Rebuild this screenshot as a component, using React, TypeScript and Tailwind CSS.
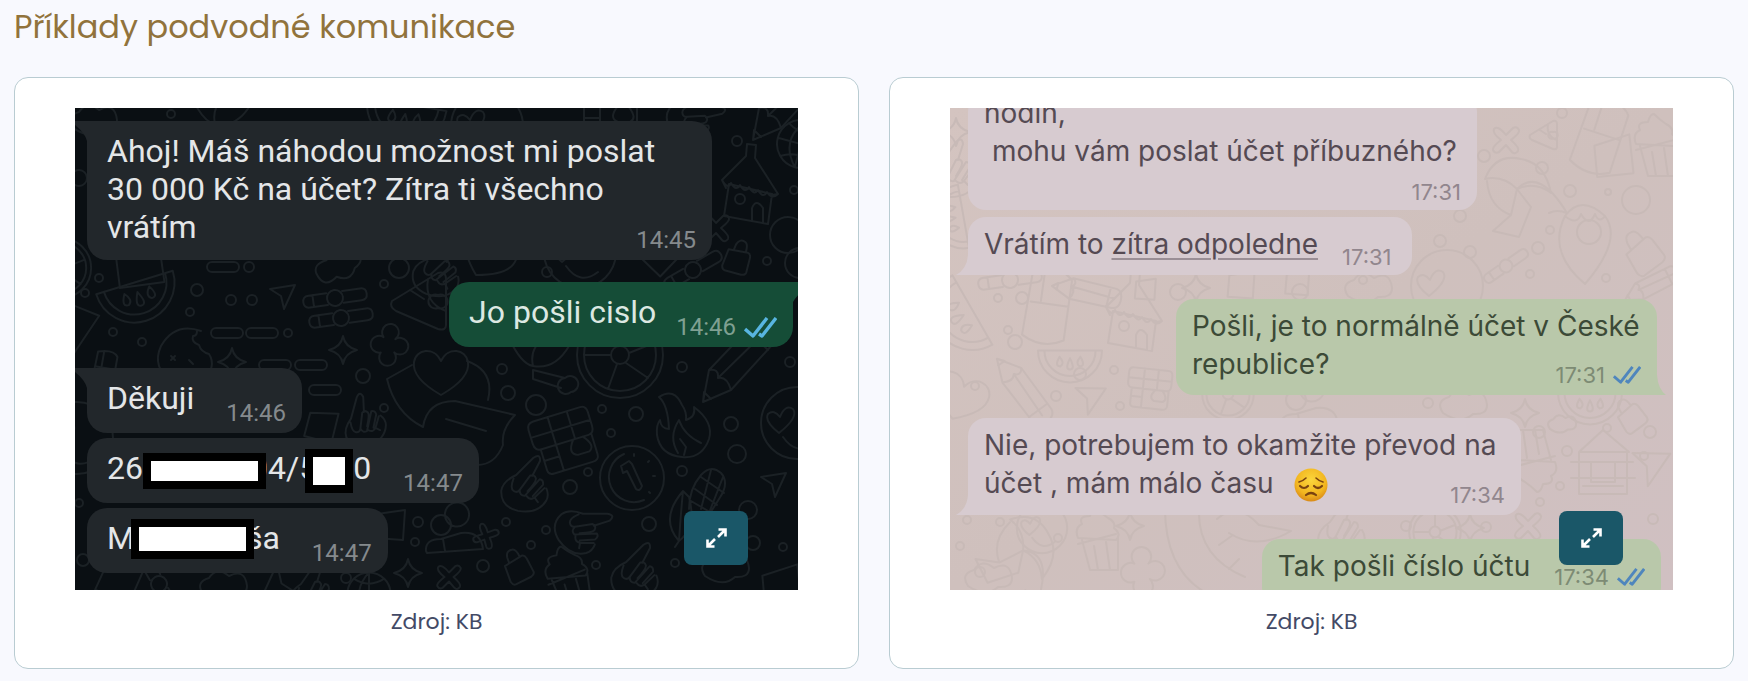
import type { ReactNode } from "react";

type At = { x: number; y: number; r?: number; s?: number };

const place = ({ x, y, r = 0, s = 1 }: At) => `translate(${x} ${y}) rotate(${r}) scale(${s})`;

const shapes: Record<string, string> = {
  plane: "M-12 -8L13 -12L2 12L-1 -1Z",
  star: "M0 -14Q2 -3 14 0Q2 3 0 14Q-2 3 -14 0Q-2 -3 0 -14Z",
  pill: "M-11 -5H11A5 5 0 0 1 11 5H-11A5 5 0 0 1 -11 -5Z",
  heart: "M0 22C-14 14 -29 2 -27 -11C-25 -24 -7 -27 0 -12C7 -27 25 -24 27 -11C29 2 14 14 0 22Z",
  melon: "M-40 -12H40A40 40 0 0 1 -40 -12ZM-32 -12A32 32 0 0 0 32 -12M-13 -4Q-20 8 -12 8Q-6 4 -13 -4M0 -2Q-7 12 0 12Q7 12 0 -2M13 -4Q6 4 12 8Q20 8 13 -4",
  slider: "M-8 -6H-26Q-32 -6 -32 0Q-32 6 -26 6H-8M8 -6H26Q32 -6 32 0Q32 6 26 6H8M-8 0A8 8 0 1 0 8 0A8 8 0 1 0 -8 0M-22 -6V6",
  pizza: "M-28 -2L18 -30Q26 -32 26 -24V22Q26 28 18 26L-24 8Q-31 4 -28 -2ZM8 -24Q4 0 26 8M18 -8A7 7 0 1 0 18 5A7 7 0 1 0 18 -8M-10 -13L4 -4",
  house: "M-24 30L-19 -2L24 8L20 38ZM-22 2L-26 -6L-2 -30L-1 -42L8 -41L7 -28L30 8L24 9M-26 -6Q-20 4 -17 -3Q-12 6 -8 -1Q-3 8 1 1Q6 10 10 4Q15 13 19 6Q24 14 30 8M4 34V22Q8 12 15 22V37M-13 13A5 5 0 1 0 -3 13A5 5 0 1 0 -13 13",
  globe: "M-24 0A24 24 0 1 0 24 0A24 24 0 1 0 -24 0M-24 0H24M0 -24V24M-17 -17Q0 -6 17 -17M-17 17Q0 6 17 17M0 -24Q-22 0 0 24",
  lock: "M-11 -5L8 -9Q11 -9 12 -5L14 10Q14 13 10 14L-7 16Q-10 16 -11 12ZM-6 -6V-12Q-5 -19 1 -18Q5 -18 6 -9",
  cross: "M0 -5L7 -12Q11 -14 13 -10Q14 -7 5 0Q14 8 12 11Q9 15 6 12L0 5L-7 12Q-11 14 -13 10Q-14 7 -5 0Q-14 -7 -12 -11Q-8 -15 0 -5Z",
  wheel: "M-43 0A43 43 0 1 0 43 0A43 43 0 1 0 -43 0M-36 0A36 36 0 1 0 36 0A36 36 0 1 0 -36 0M-9 0A9 9 0 1 0 9 0A9 9 0 1 0 -9 0M-9 0H-36M9 -2L34 -12M-3 9L-12 34M6 8L28 23M0 -9V-36",
  pencil: "M-36 42L-30 10L14 -36Q22 -42 32 -32Q40 -24 34 -16L-8 30ZM-30 10Q-20 8 -21 18Q-12 16 -8 30M-21 18L24 -26M8 -30L29 -10M-36 42L-35 32L-28 39",
  fire: "M-25 -30Q-10 -40 -2 -22Q3 -15 2 -7Q12 -10 10 -20Q30 -5 25 12Q18 32 -2 30Q-24 28 -27 8Q-28 -2 -24 -7Q-23 2 -15 2Q-16 -22 -25 -30ZM-6 26Q-16 10 -5 -7Q0 8 17 16M-4 12L2 20L0 28",
  gift: "M-32 -20Q-32 -27 -25 -27H24Q30 -27 30 -20V-6Q30 2 24 2H-25Q-32 2 -32 -6ZM-32 -12H30M-10 -27V2M10 -27V2M-26 2V24Q-26 29 -20 29H20Q27 29 27 23V2M-10 2V29M8 2Q-2 14 8 18H20Q28 14 18 2M-26 14H-10",
  smile: "M-36 0A36 36 0 1 0 36 0A36 36 0 1 0 -36 0M-18 10Q-33 -2 -29 -9Q-23 -14 -17 -6Q-12 -19 -4 -14Q2 -6 -18 10M-14 14Q0 34 18 20",
  coin: "M-32 0A32 32 0 1 0 32 0A32 32 0 1 0 -32 0M-8 -24A24 24 0 1 0 12 22M-11 -12L-3 -17L0 -14L10 8Q8 14 4 11L-5 -7L-9 -5ZM2 -24V-22M17 -17L16 -16M23 -2H21M18 15L17 14",
  hand: "M-12 -6L2 -26Q8 -32 9 -24L4 -8M-12 -6Q-24 2 -24 12Q-22 28 -4 29Q16 29 22 14Q24 8 20 2M-14 -2Q-16 8 -12 10Q-8 12 -6 8L2 -8Q6 -10 8 -6Q9 -3 2 8M-6 8Q-5 14 0 13L12 -6Q16 -6 16 -1L8 12M2 13Q6 17 10 13L18 2M10 13L14 17",
  corn: "M-8 12Q-8 -8 4 -22Q14 -33 24 -24Q33 -14 22 2L12 18M-6 4L18 18M-2 -8L20 8M4 -20L27 -4M14 -27L4 12M26 -20L12 16M-14 -6Q-38 22 -18 44Q0 30 -8 0ZM-18 44Q-16 14 -14 -6M-18 44L-22 50",
  cake: "M-20 -4Q-24 -14 -16 -18Q-20 -26 -8 -26Q-6 -34 -2 -34Q4 -28 10 -24Q18 -20 16 -14Q24 -8 18 -2ZM-20 2L18 -8M-16 -2L-8 28H20L20 -4M-4 4L0 28M8 0L12 28",
  cookie: "M18 -23Q-8 -32 -22 -8Q-32 14 -10 28H20Q34 12 26 0Q18 -2 16 -9Q8 -12 10 -18Q14 -18 14 -23M-12 2L-8 6M-8 2L-12 6M6 6L10 10",
  hat: "M-34 -22Q-22 4 -10 6Q-14 -12 2 -22M-10 6Q12 10 26 -14M-10 10L22 18M-10 10V19L18 28M22 18A8 8 0 1 0 28 32A8 8 0 1 0 22 18",
  people: "M-22 0A10 10 0 1 0 -2 0A10 10 0 1 0 -22 0M-8 -12A12 12 0 1 0 16 -9A12 12 0 1 0 -8 -12M-27 26Q-28 14 -12 14L8 8Q28 6 30 24L-26 28ZM-10 14L-8 26",
  holder: "M-29 -8L-54 6Q-46 40 -18 54Q-14 28 14 28Q40 34 74 42Q60 56 62 72Q54 92 36 92M26 -12Q54 -2 47 27M5 46L45 58",
  square: "M-14 -12L14 -16L12 14L-16 12Z",
  cloud: "M-22 8Q-30 -4 -16 -8Q-8 -20 4 -10Q20 -18 22 0Q22 10 8 9Q-4 20 -22 8Z",
  flower: "M-4 -6A7 7 0 1 1 6 -6A7 7 0 1 1 7 5A7 7 0 1 1 -4 7A7 7 0 1 1 -4 -6",
  strawberry: "M-20 -22Q-4 -44 20 -22Q38 2 0 46Q-38 14 -20 -22ZM-20 -22Q-8 -12 -4 -24Q4 -10 10 -24Q14 -14 20 -22M-8 -6A12 12 0 1 0 16 -6A12 12 0 1 0 -8 -6",
  palm: "M-32 -14Q-22 -40 4 -34Q28 -30 34 0Q18 -12 0 -4Q-14 -18 -32 -14M0 -4Q22 -26 50 20Q40 16 32 20M0 -4L-6 22L-24 38L2 44L14 14Q6 4 0 -4M-30 -12Q-28 14 -6 22",
  moon: "M-62 -50Q-64 40 16 52M-28 -44Q-30 4 18 24M-8 -8L6 -18M2 16L12 6M-10 -34Q10 -52 32 -28L64 -22Q30 -2 2 -20",
  cabin: "M-24 -14L0 -36L26 -14ZM-24 -14V28H24V-14M-32 -4H30M-32 12H32M-12 -4V16H12V-4M-20 20H20",
  bread: "M-20 -34Q10 -44 20 -30V30Q0 42 -22 30ZM-18 -4H20M-8 -34V-6",
};

function Doodle({ kind, ...at }: At & { kind: string }) {
  return <path transform={place(at)} d={shapes[kind]} vectorEffect="non-scaling-stroke" />;
}

type Item = [string, number, number, number?, number?];

function Wallpaper({ items, dots, className }: { items: Item[]; dots: number[][]; className: string }) {
  return (
    <svg
      viewBox="0 0 723 482"
      preserveAspectRatio="xMidYMid slice"
      aria-hidden="true"
      className={`absolute inset-0 size-full fill-none stroke-2 ${className}`}
      strokeLinecap="round"
      strokeLinejoin="round"
    >
      {items.map(([kind, x, y, r, s], i) => (
        <Doodle key={i} kind={kind} x={x} y={y} r={r} s={s} />
      ))}
      {dots.map(([x, y, r], i) => (
        <circle key={i} cx={x} cy={y} r={r} />
      ))}
    </svg>
  );
}

const darkItems: Item[] = [
  ["melon", 63, 186, -17], ["plane", 207, 189], ["slider", 260, 190, -8], ["slider", 266, 210, -8], ["pizza", 345, 195],
  ["star", 268, 242], ["flower", 312, 237, 10, 1.2], ["cookie", 108, 246], ["square", 66, 156, -12, 1.6], ["square", -6, 218, 30, 1.5],
  ["pill", 152, 225], ["pill", 187, 225], ["pill", 148, 159], ["pill", 200, 257], ["pill", 236, 257], ["pill", 250, 282],
  ["cloud", 20, 12], ["hat", 150, 10], ["melon", 330, 8, 10], ["smile", 412, 18], ["gift", 535, -4], ["hand", 622, 10, 60],
  ["cloud", 262, 158, 160], ["hand", 365, 160, 20], ["heart", 412, 148, 30], ["smile", 505, 144], ["square", 585, 150, 40], ["slider", 618, 162, -30],
  ["house", 673, 78], ["globe", 726, 36, 15], ["pencil", 714, -10], ["lock", 662, 150, 22], ["cross", 641, 120],
  ["smile", 2, 330], ["star", 157, 254], ["square", 247, 319, 10], ["hand", 288, 312, -20, 0.9], ["bread", 30, 262, 10, 0.5],
  ["holder", 366, 265], ["heart", 366, 265], ["hat", 468, 252], ["wheel", 545, 247], ["pencil", 664, 252], ["fire", 609, 319],
  ["gift", 490, 332, -17], ["smile", 722, 315], ["coin", 557, 370], ["hand", 452, 375, 10], ["hand", 510, 419, 55], ["hand", 562, 462, 10],
  ["corn", 622, 389], ["plane", 698, 377], ["cake", 493, 472, -8], ["lock", 442, 459, -20], ["cross", 374, 469, 0, 0.9], ["cross", 411, 428, 25, 0.8],
  ["people", 378, 417], ["cloud", 652, 460], ["square", 708, 480, -10, 1.3], ["star", 333, 465], ["square", 316, 418], ["square", 45, 474, 20, 1.3],
  ["slider", 84, 476, 60], ["cloud", 150, 478], ["plane", 205, 474, 180, 1.5], ["hand", 238, 482], ["globe", 294, 486, 0, 0.9], ["wheel", -14, 160, 0, 0.7],
];
const darkDots = [
  [24, 170, 4], [10, 185, 4], [122, 182, 6], [156, 192, 5], [177, 192, 5], [115, 204, 4], [38, 224, 4], [67, 234, 4], [309, 176, 4],
  [213, 225, 4], [174, 159, 5], [662, 33, 5], [692, 153, 4], [713, 127, 18], [725, 155, 15], [472, 164, 5], [324, 160, 10], [719, 82, 4],
  [433, 285, 7], [427, 261, 5], [461, 297, 10], [607, 259, 5], [715, 254, 5], [561, 306, 7], [527, 301, 4], [536, 325, 4], [656, 316, 7],
  [662, 346, 9], [513, 364, 4], [495, 379, 7], [607, 363, 5], [673, 402, 9], [574, 416, 7], [678, 435, 7], [708, 439, 4], [600, 455, 4],
  [521, 457, 4], [408, 458, 6], [431, 414, 4], [471, 422, 4], [456, 437, 4], [288, 268, 7], [309, 300, 4], [343, 414, 5], [340, 434, 4],
  [271, 470, 5], [4, 395, 4], [8, 452, 6], [96, 6, 4], [4, 70, 8],
];

const lightItems: Item[] = [
  ["cross", 556, 32], ["bread", 650, 30, 18], ["square", 665, 50, -10, 1.3], ["palm", 567, 85], ["strawberry", 635, 130], ["pizza", 594, 28, 0, 0.5],
  ["lock", 692, 145, -30, 1.3], ["smile", 497, 178], ["slider", 556, 158, -35, 0.8], ["pencil", 704, 176, 20, 0.6], ["cake", 706, 40],
  ["melon", 12, 208, 60], ["bread", 98, 200, 8], ["pencil", 140, 185, 60, 0.7], ["house", 182, 205], ["square", 196, 182, 0, 0.7],
  ["slider", 60, 172, -8], ["square", 292, 178, 0, 0.9], ["star", 246, 180], ["square", 348, 176, 0, 0.8], ["cloud", 420, 180],
  ["heart", 10, 290, 20], ["pencil", 75, 285, 100, 0.8], ["plane", 138, 292, 10, 1.2], ["gift", 200, 280, 6, 0.7], ["melon", 120, 252, 0, 0.8],
  ["wheel", 278, 286, 0, 0.6], ["people", 358, 292], ["cloud", 515, 297], ["star", 575, 305], ["melon", 640, 294, 0, 0.8], ["cloud", 613, 316, 0, 0.6],
  ["cabin", 653, 358], ["plane", 698, 360, 10, 1.5], ["cake", 585, 350, 180], ["lock", 680, 308, -30],
  ["cake", 148, 434], ["palm", 70, 445, 50], ["moon", 277, 445], ["star", 180, 418], ["flower", 190, 464, 0, 1.4], ["smile", 92, 420, 0, 0.7],
  ["hand", 392, 420], ["wheel", 485, 424, 0, 0.6], ["cross", 578, 418], ["star", 520, 420], ["cloud", 40, 470],
  ["hand", 4, 60], ["melon", 4, 110, 80, 0.8], ["star", 6, 24],
];
const lightDots = [
  [592, 60, 6], [534, 48, 6], [620, 83, 6], [612, 5, 5], [686, 92, 14], [658, 84, 3], [490, 133, 6], [520, 144, 6], [510, 108, 6],
  [600, 122, 4], [588, 140, 6], [656, 170, 4], [413, 172, 4], [580, 166, 4], [48, 190, 4], [72, 190, 6], [65, 234, 7], [58, 222, 4],
  [130, 266, 6], [164, 262, 4], [106, 288, 5], [170, 298, 4], [25, 278, 4], [478, 295, 5], [589, 324, 6], [700, 324, 6], [657, 320, 4],
  [617, 343, 5], [610, 378, 4], [694, 348, 4], [590, 394, 4], [703, 411, 5], [17, 412, 4], [50, 414, 4], [108, 430, 4], [10, 438, 4],
  [536, 419, 5], [456, 418, 5], [30, 464, 5], [228, 184, 8], [350, 184, 8],
];

function Ticks({ className }: { className: string }) {
  return (
    <svg viewBox="0 0 33 21" aria-hidden="true" className={`fill-none stroke-[3.4] ${className}`} strokeLinejoin="round">
      <path d="M1 12L9 19L23 1M15 17L18 19L32 1" />
    </svg>
  );
}

function Tail({ className, d }: { className: string; d: string }) {
  return (
    <svg viewBox="0 0 12 20" aria-hidden="true" className={`absolute h-5 w-3 ${className}`}>
      <path d={d} />
    </svg>
  );
}

type BubbleProps = { time: string; sent?: boolean; tail?: boolean; className: string; children: ReactNode };

function DarkBubble({ time, sent, tail, className, children }: BubbleProps) {
  const corner = tail ? (sent ? "rounded-tr-none" : "rounded-tl-none") : "";
  return (
    <div
      className={`relative flex justify-between rounded-[20px] pt-[11px] pb-1.5 pl-5 ${corner} ${sent ? "self-end bg-[#154d37] text-[#dce8e2]" : "self-start bg-[#22272b] text-[#e4e6e8]"} ${className}`}
    >
      {tail && !sent && <Tail className="top-0 right-full fill-[#22272b]" d="M0 0H12V20Q10 12 0 4Z" />}
      {tail && sent && <Tail className="top-0 left-full fill-[#154d37]" d="M12 0H0V20Q2 16 12 6Z" />}
      <div className="flex min-w-0 flex-1 items-start whitespace-nowrap">{children}</div>
      <span className={`flex items-center gap-2 self-end text-2xl leading-7 ${sent ? "text-[#7fa092]" : "text-[#858a8d]"}`}>
        {time}
        {sent && <Ticks className="h-[21px] w-[33px] stroke-[#58b5e0]" />}
      </span>
    </div>
  );
}

function LightBubble({ time, sent, tail, className, children }: BubbleProps) {
  const corner = tail ? (sent ? "rounded-br-none" : "rounded-bl-none") : "";
  return (
    <div
      className={`relative flex justify-between rounded-[18px] pl-4 ${corner} ${sent ? "self-end bg-[#b9c8aa] text-[#3c4a37]" : "self-start bg-[#d7cbd0] text-[#554a53]"} ${className}`}
    >
      {tail && !sent && <Tail className="right-full bottom-0 fill-[#d7cbd0]" d="M12 20V0Q11 14 0 20Z" />}
      {tail && sent && <Tail className="bottom-0 left-full fill-[#b9c8aa]" d="M0 20V0Q1 14 9 20Z" />}
      <div className="min-w-0 flex-1 whitespace-nowrap">{children}</div>
      <span className={`flex items-center gap-2 self-end text-[22px] leading-6 ${sent ? "text-[#7d8b74]" : "text-[#91868d]"}`}>
        {time}
        {sent && <Ticks className="h-[18px] w-7 stroke-[#4f86bd]" />}
      </span>
    </div>
  );
}

function SadFace() {
  return (
    <svg viewBox="0 0 34 34" role="img" aria-label="😔" className="ml-5 inline-block size-[34px] fill-none stroke-[#7a4310]" strokeLinecap="round">
      <defs>
        <radialGradient id="face" cx="0.5" cy="0.35" r="0.65">
          <stop offset="0" stopColor="#fbd63c" />
          <stop offset="0.7" stopColor="#f2b51f" />
          <stop offset="1" stopColor="#d98a18" />
        </radialGradient>
      </defs>
      <circle cx="17" cy="17" r="16.5" fill="url(#face)" stroke="none" />
      <path strokeWidth="1.6" d="M5 14Q9 13 12 10M29 14Q25 13 22 10" />
      <path strokeWidth="2.2" d="M6 18Q10 22 14 18M20 18Q24 22 28 18M12 27Q17 23 22 27" />
    </svg>
  );
}

function ExampleCard({ children }: { children: ReactNode }) {
  return (
    <figure className="rounded-[14px] border border-[#b9ccd2] bg-white px-15 pt-[30px] pb-[30px]">
      <div className="relative aspect-[3/2] overflow-hidden">
        {children}
        <button
          type="button"
          aria-label="Zvětšit obrázek"
          className="absolute right-[50px] bottom-[25px] flex h-[54px] w-16 items-center justify-center rounded-lg bg-[#1a5768]"
        >
          <svg viewBox="0 0 21 20" aria-hidden="true" className="h-5 w-[21px] fill-none stroke-white stroke-[2.6]">
            <path d="M12.5 1.5H19.5V8.5M19.5 1.5L12 9M8.500 18.500H1.500V11.500M1.500 18.500L9 11" />
          </svg>
        </button>
      </div>
      <figcaption className="mt-4 text-center text-[22px] leading-8 text-[#434a66]">Zdroj: KB</figcaption>
    </figure>
  );
}

export default function App() {
  return (
    <main className="min-h-screen bg-[#f8f9fe] px-[14px] pt-1 pb-3 font-[Poppins,Inter,sans-serif]">
      <h2 className="mb-[27px] text-[32px] leading-[46px] text-[#91733c]">Příklady podvodné komunikace</h2>
      <div className="grid grid-cols-2 gap-[30px]">
        <ExampleCard>
          <div className="absolute inset-0 bg-[#0a0f13]">
            <Wallpaper items={darkItems} dots={darkDots} className="stroke-[#1b2125]" />
            <div className="relative flex flex-col pt-[13px] pl-3 font-[Roboto,sans-serif] text-[32px] leading-[38px]">
              <DarkBubble time="14:45" tail className="h-[139px] w-[625px] pr-4">
                <p>
                  Ahoj! Máš náhodou možnost mi poslat
                  <br />
                  30 000 Kč na účet? Zítra ti všechno
                  <br />
                  vrátím
                </p>
              </DarkBubble>
              <DarkBubble time="14:46" sent tail className="mt-[22px] mr-[5px] h-[65px] gap-5 pr-4">
                <p>Jo pošli cislo</p>
              </DarkBubble>
              <DarkBubble time="14:46" tail className="mt-[21px] h-[65px] gap-8 pr-4">
                <p>Děkuji</p>
              </DarkBubble>
              <DarkBubble time="14:47" className="mt-[5px] h-[65px] gap-8 pr-4">
                <span>26</span>
                <span className="relative z-10 mt-1 -mr-4 h-9 w-[123px] border-8 border-black bg-white" />
                <span>04/5</span>
                <span className="relative z-10 -ml-3 h-11 w-12 border-8 border-black bg-white" />
                <span>0</span>
              </DarkBubble>
              <DarkBubble time="14:47" className="mt-[5px] h-[65px] gap-8 pr-4">
                <span>M</span>
                <span className="relative z-10 -mr-2 -ml-1 h-10 w-[123px] border-8 border-black bg-white" />
                <span>ša</span>
              </DarkBubble>
            </div>
          </div>
        </ExampleCard>
        <ExampleCard>
          <div className="absolute inset-0 bg-linear-to-br from-[#d4c4c0] via-[#cfc0bd] to-[#d0c0c2]">
            <Wallpaper items={lightItems} dots={lightDots} className="stroke-[#c8bab7]" />
            <div className="relative flex flex-col pl-[18px] font-[Inter,sans-serif] text-[28px] leading-[38px]">
              <LightBubble time="17:31" className="-mt-[14px] h-[116px] w-[509px] pr-4 pb-1.5">
                <p>
                  hodin,
                  <br />
                  <span className="pl-2">mohu vám poslat účet příbuzného?</span>
                </p>
              </LightBubble>
              <LightBubble time="17:31" tail className="mt-[7px] h-[58px] gap-6 pt-2 pr-5 pb-1.5">
                <p>
                  Vrátím to <span className="underline decoration-[#9a8e95] decoration-2 underline-offset-4">zítra odpoledne</span>
                </p>
              </LightBubble>
              <LightBubble time="17:31" sent tail className="mt-6 mr-4 h-24 w-[481px] pt-2 pr-4 pb-2">
                <p>
                  Pošli, je to normálně účet v České
                  <br />
                  republice?
                </p>
              </LightBubble>
              <LightBubble time="17:34" tail className="mt-[23px] h-[97px] w-[553px] pt-2 pr-4 pb-2">
                <p>
                  Nie, potrebujem to okamžite převod na
                  <br />
                  účet , mám málo času
                  <SadFace />
                </p>
              </LightBubble>
              <LightBubble time="17:34" sent className="mt-6 mr-3 h-[66px] gap-6 pt-2 pr-4 pb-4">
                <p>Tak pošli číslo účtu</p>
              </LightBubble>
            </div>
          </div>
        </ExampleCard>
      </div>
    </main>
  );
}
